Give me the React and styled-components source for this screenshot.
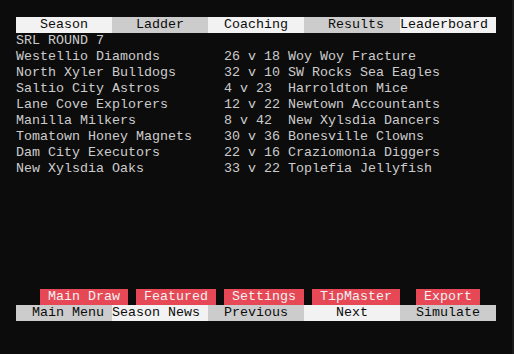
import React from 'react';
import styled, { createGlobalStyle } from 'styled-components';

const CH = 8;

const GlobalStyle = createGlobalStyle`
  html, body {
    margin: 0;
    padding: 0;
    background: #0c0c0c;
  }
`;

const tabs = [
  { label: 'Season', offset: 3, light: true },
  { label: 'Ladder', offset: 3, light: false },
  { label: 'Coaching', offset: 2, light: true },
  { label: 'Results', offset: 3, light: false },
  { label: 'Leaderboard', offset: 0, light: true },
];

const matches = [
  ['Westellio Diamonds', '26 v 18', 'Woy Woy Fracture'],
  ['North Xyler Bulldogs', '32 v 10', 'SW Rocks Sea Eagles'],
  ['Saltio City Astros', '4 v 23', 'Harroldton Mice'],
  ['Lane Cove Explorers', '12 v 22', 'Newtown Accountants'],
  ['Manilla Milkers', '8 v 42', 'New Xylsdia Dancers'],
  ['Tomatown Honey Magnets', '30 v 36', 'Bonesville Clowns'],
  ['Dam City Executors', '22 v 16', 'Craziomonia Diggers'],
  ['New Xylsdia Oaks', '33 v 22', 'Toplefia Jellyfish'],
];

const actions = [
  { label: 'Main Draw', gap: 0 },
  { label: 'Featured', gap: 1 },
  { label: 'Settings', gap: 1 },
  { label: 'TipMaster', gap: 1 },
  { label: 'Export', gap: 2 },
];

const navs = [
  { label: 'Main Menu', offset: 2, light: false },
  { label: 'Season News', offset: 0, light: true },
  { label: 'Previous', offset: 2, light: false },
  { label: 'Next', offset: 4, light: true },
  { label: 'Simulate', offset: 2, light: false },
];

function App() {
  return (
    <Console>
      <GlobalStyle />
      <Bar>
        {tabs.map((t) => (
          <Cell key={t.label} $light={t.light} $offset={t.offset}>
            {t.label}
          </Cell>
        ))}
      </Bar>
      <Line>SRL ROUND 7</Line>
      {matches.map(([home, score, away]) => (
        <Match key={home}>
          <span>{home}</span>
          <span>{score}</span>
          <span>{away}</span>
        </Match>
      ))}
      <Actions>
        {actions.map((a) => (
          <RedButton key={a.label} $gap={a.gap}>
            {a.label}
          </RedButton>
        ))}
      </Actions>
      <Bar>
        {navs.map((n) => (
          <Cell key={n.label} $light={n.light} $offset={n.offset}>
            {n.label}
          </Cell>
        ))}
      </Bar>
    </Console>
  );
}

export default App;

const Console = styled.div`
  width: 496px;
  height: 337px;
  padding: 17px 0 0 16px;
  border-right: 2px solid #1a1a1a;
  background: #0c0c0c;
  color: #cccccc;
  font-family: 'Liberation Mono', 'Courier New', monospace;
  font-size: 13.333px;
  line-height: 16px;
  white-space: pre;
`;

const Bar = styled.div`
  display: grid;
  grid-template-columns: repeat(5, ${12 * CH}px);
  height: 16px;
`;

const Cell = styled.div`
  background: ${(p) => (p.$light ? '#f2f2f2' : '#cccccc')};
  color: #0c0c0c;
  padding-left: ${(p) => p.$offset * CH}px;
  overflow: hidden;
`;

const Line = styled.div`
  height: 16px;
`;

const Match = styled.div`
  display: grid;
  grid-template-columns: ${26 * CH}px ${8 * CH}px auto;
  height: 16px;
`;

const Actions = styled.div`
  display: flex;
  margin-top: ${7 * 16}px;
  padding-left: ${3 * CH}px;
  height: 16px;
`;

const RedButton = styled.div`
  background: #e74856;
  color: #f2f2f2;
  padding: 0 ${CH}px;
  margin-left: ${(p) => p.$gap * CH}px;
`;
